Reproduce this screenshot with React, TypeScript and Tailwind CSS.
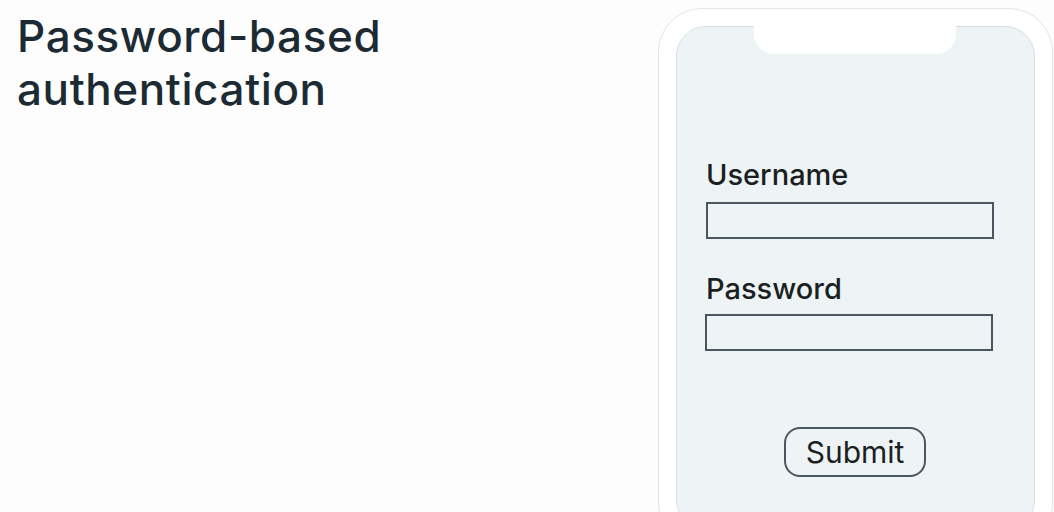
export default function App() {
  return (
    <div
      className="relative w-[1054px] h-[512px] overflow-hidden bg-[#fdfdfd] text-[#1c2b33]"
      style={{ fontFamily: "Inter, 'Noto Sans', sans-serif" }}
    >
      {/* Heading */}
      <h1 className="absolute left-[17px] top-[10px] text-[44px] leading-[53px] font-medium tracking-[0.6px]">
        Password-based
        <br />
        authentication
      </h1>

      {/* Phone frame */}
      <div className="absolute left-[658px] top-[8px] w-[395px] h-[540px] rounded-[44px] border border-[#e2e5e6] bg-white p-[17px]">
        <div className="relative h-full rounded-[30px] border border-[#d9dfe0] bg-[#eef4f5]">
          {/* Notch */}
          <div className="absolute left-[77px] -top-px w-[202px] h-[28px] rounded-b-[20px] bg-white" />

          <div className="flex flex-col pl-[29px] pr-[40px] pt-[132px]">
            <label className="text-[29px] leading-[32px] font-medium text-[#1b1f22]">Username</label>
            <div className="mt-[11px] h-[37px] border-2 border-[#4b5760] bg-[#eef4f5]" />

            <label className="mt-[34px] text-[29px] leading-[32px] font-medium text-[#1b1f22]">Password</label>
            <div className="mt-[9px] h-[37px] -ml-px mr-px border-2 border-[#4b5760] bg-[#eef4f5]" />

            <div className="mt-[76px] flex justify-center">
              <button className="ml-[10px] h-[50px] w-[142px] rounded-[16px] border-2 border-[#4b5760] text-[30px] text-[#1b1f22]">
                Submit
              </button>
            </div>
          </div>
        </div>
      </div>
    </div>
  );
}
